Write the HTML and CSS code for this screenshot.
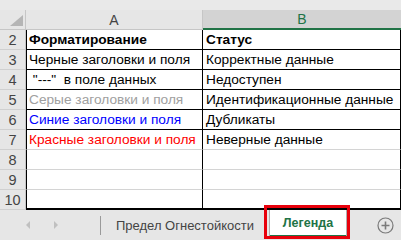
FILE: index.html
```html
<!DOCTYPE html>
<html lang="ru">
<head>
    <meta charset="UTF-8">
    <title>Легенда</title>
    <link rel="stylesheet" href="styles.css">
</head>
<body>
    <div class="sheet">
        <div class="top-strip"></div>
        <div class="row head">
            <div class="corner"><span class="tri"></span></div>
            <div class="col">A</div>
            <div class="col sel">B</div>
        </div>
        <div class="row">
            <div class="num">2</div>
            <div class="cell a bold">Форматирование</div>
            <div class="cell b bold">Статус</div>
        </div>
        <div class="row">
            <div class="num">3</div>
            <div class="cell a">Черные заголовки и поля</div>
            <div class="cell b">Корректные данные</div>
        </div>
        <div class="row">
            <div class="num">4</div>
            <div class="cell a">&nbsp;"---" &nbsp;в поле данных</div>
            <div class="cell b">Недоступен</div>
        </div>
        <div class="row">
            <div class="num">5</div>
            <div class="cell a gray">Серые заголовки и поля</div>
            <div class="cell b">Идентификационные данные</div>
        </div>
        <div class="row">
            <div class="num">6</div>
            <div class="cell a blue">Синие заголовки и поля</div>
            <div class="cell b">Дубликаты</div>
        </div>
        <div class="row">
            <div class="num">7</div>
            <div class="cell a red">Красные заголовки и поля</div>
            <div class="cell b">Неверные данные</div>
        </div>
        <div class="row empty">
            <div class="num">8</div>
            <div class="cell a"></div>
            <div class="cell b"></div>
        </div>
        <div class="row empty">
            <div class="num">9</div>
            <div class="cell a"></div>
            <div class="cell b"></div>
        </div>
        <div class="row empty last">
            <div class="num">10</div>
            <div class="cell a"></div>
            <div class="cell b"></div>
        </div>
    </div>

    <div class="tabs">
        <div class="nav">
            <span class="arrow left"></span>
            <span class="arrow right"></span>
        </div>
        <div class="sep"></div>
        <div class="tab">Предел Огнестойкости</div>
        <div class="tab active">
            Легенда
            <span class="mark"></span>
        </div>
        <div class="add">
            <svg width="17" height="17" viewBox="0 0 17 17">
                <circle cx="8.5" cy="8.5" r="7.5" fill="none" stroke="#7a7a7a" stroke-width="1.2"/>
                <path d="M8.5 4.5v8M4.5 8.5h8" stroke="#7a7a7a" stroke-width="1.6"/>
            </svg>
        </div>
    </div>
</body>
</html>
```

FILE: styles.css
```css
body {
    margin: 0;
    width: 401px;
    height: 240px;
    overflow: hidden;
    background: #e6e6e6;
    font-family: 'Liberation Sans', Arial, sans-serif;
    font-size: 13.7px;
    color: #000;
}
.top-strip {
    height: 10px;
    background: #e9e9e9;
}
.row {
    display: grid;
    grid-template-columns: 26px 177px 198px;
    height: 20px;
}
.head {
    background: #e6e6e6;
    color: #444;
}
.corner {
    position: relative;
    border-right: 1px solid #c6c6c6;
    border-bottom: 1px solid #c6c6c6;
}
.tri {
    position: absolute;
    right: 2px;
    bottom: 3px;
    width: 0;
    height: 0;
    border-left: 13px solid transparent;
    border-bottom: 11px solid #b5b5b5;
}
.col {
    display: flex;
    align-items: center;
    justify-content: center;
    font-size: 14px;
    border-right: 1px solid #c6c6c6;
    border-bottom: 1px solid #c6c6c6;
}
.col.sel {
    background: #d3d3d3;
    color: #217346;
    border-right: none;
    border-bottom: 2px solid #217346;
}
.num {
    display: flex;
    align-items: center;
    justify-content: center;
    background: #e6e6e6;
    color: #444;
    font-size: 14.5px;
    border-right: 1px solid #c6c6c6;
    border-bottom: 1px solid #d0d0d0;
}
.cell {
    background: #fff;
    display: flex;
    align-items: center;
    white-space: nowrap;
    overflow: hidden;
    border-bottom: 1px solid #000;
}
.cell.a {
    border-left: 1px solid #000;
    border-right: 1px solid #000;
    padding-left: 2px;
}
.cell.b {
    border-right: 1px solid #000;
    padding-left: 3px;
}
.bold { font-weight: bold; }
.gray { color: #a0a0a0; }
.blue { color: #0000ff; }
.red { color: #ff0000; }
.row.empty .cell {
    border-bottom-color: #d4d4d4;
}
.row:nth-child(8) .cell {
    border-bottom-color: #d4d4d4;
}
.row.last .cell {
    border-bottom: 2px solid #000;
}
.tabs {
    display: flex;
    align-items: center;
    height: 30px;
    background: #e6e6e6;
    color: #444;
    font-size: 13px;
}
.nav {
    display: flex;
    align-items: center;
    gap: 24px;
    width: 74px;
    padding-left: 26px;
}
.arrow {
    width: 0;
    height: 0;
    border-top: 4px solid transparent;
    border-bottom: 4px solid transparent;
}
.arrow.left { border-right: 4px solid #c0c0c0; }
.arrow.right { border-left: 4px solid #c0c0c0; }
.sep {
    width: 1px;
    height: 19px;
    background: #9a9a9a;
}
.tab {
    padding: 0 15px;
    height: 100%;
    display: flex;
    align-items: center;
}
.tab.active {
    position: relative;
    padding: 0;
    width: 76px;
    height: 25px;
    align-self: flex-start;
    background: #fff;
    color: #217346;
    font-size: 12.5px;
    font-weight: bold;
    border-left: 1px solid #b0b0b0;
    border-right: 1px solid #b0b0b0;
    border-bottom: 3px solid #217346;
    justify-content: center;
}
.mark {
    position: absolute;
    left: -6px;
    top: -5px;
    width: 80px;
    height: 28px;
    border: 3px solid #e8000b;
}
.add {
    margin-left: auto;
    margin-right: 7px;
    display: flex;
}
```
